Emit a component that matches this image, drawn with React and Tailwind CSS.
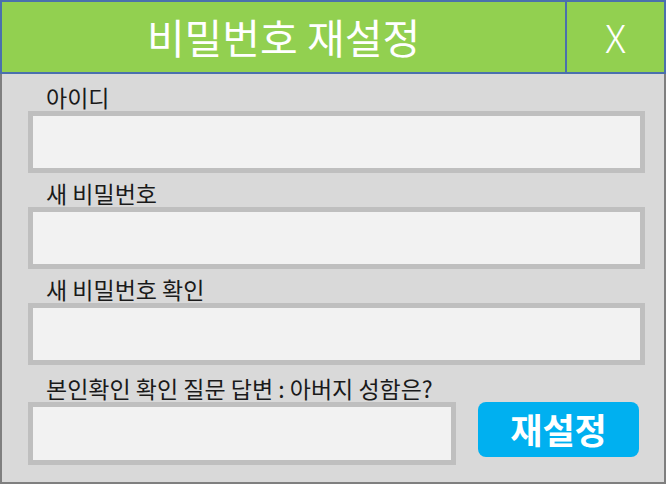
export default function App() {
  const font = { fontFamily: '"Noto Sans CJK KR", "Noto Sans", sans-serif' };
  const labels = ["아이디", "새 비밀번호", "새 비밀번호 확인"];
  return (
    <div className="w-[666px] h-[484px] flex flex-col bg-white" style={font}>
      <div className="h-[74px] flex border-2 border-[#4a70ad] bg-[#92d050] text-white">
        <div className="w-[563px] flex items-center justify-center text-[41px] leading-none pb-[2px]">
          비밀번호 재설정
        </div>
        <div className="w-[2px] bg-[#4a70ad]" />
        <div className="flex-1 flex items-center justify-center text-[39px] leading-none font-light pb-[1px]">
          X
        </div>
      </div>
      <div className="flex-1 flex flex-col bg-[#d9d9d9] border-2 border-t-0 border-[#7f7f7f] pl-[26px] pr-[19px] pt-[11px]">
        {labels.map((l, i) => (
          <div key={l} className={i > 0 ? "mt-[8px]" : ""}>
            <div className="h-[26px] pl-[18px] text-[23px] leading-[24px] text-[#1a1a1a]">{l}</div>
            <div className="h-[62px] border-[5px] border-[#bfbfbf] bg-[#f2f2f2]" />
          </div>
        ))}
        <div className="mt-[11px]">
          <div className="h-[26px] pl-[18px] text-[23px] leading-[24px] text-[#1a1a1a]">
            본인확인 확인 질문 답변 : 아버지 성함은?
          </div>
          <div className="flex items-start">
            <div className="w-[428px] h-[63px] border-[5px] border-[#bfbfbf] bg-[#f2f2f2]" />
            <button className="ml-[22px] w-[161px] h-[55px] rounded-[8px] bg-[#00b0f0] text-white text-[35px] font-bold leading-none flex items-center justify-center pb-[3px]">
              재설정
            </button>
          </div>
        </div>
      </div>
    </div>
  );
}
